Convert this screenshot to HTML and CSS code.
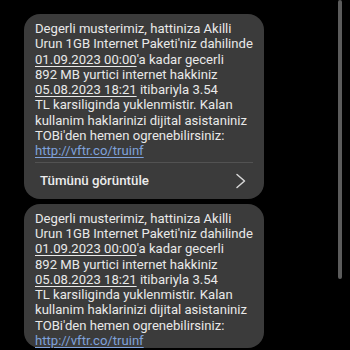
FILE: index.html
```html
<!DOCTYPE html>
<html>
<head>
<meta charset="utf-8">
<link rel="stylesheet" href="styles.css">
</head>
<body>
<div class="thread">
  <div class="bubble">
    <p class="msg">Degerli musterimiz, hattiniza Akilli<br>Urun 1GB Internet Paketi'niz dahilinde<br><span class="u">01.09.2023 00:00</span>'a kadar gecerli<br>892 MB yurtici internet hakkiniz<br><span class="u">05.08.2023 18:21</span> itibariyla 3.54<br>TL karsiliginda yuklenmistir. Kalan<br>kullanim haklarinizi dijital asistaniniz<br>TOBi'den hemen ogrenebilirsiniz:<br><span class="link">http://vftr.co/truinf</span></p>
    <div class="sep"></div>
    <div class="more">
      <span class="more-label">Tümünü görüntüle</span>
      <svg class="chev" width="12" height="16" viewBox="0 0 12 16"><path d="M2 1.5 L9.5 8 L2 14.5" fill="none" stroke="#d8d8d8" stroke-width="1.5" stroke-linecap="round" stroke-linejoin="round"/></svg>
    </div>
  </div>
  <div class="bubble">
    <p class="msg">Degerli musterimiz, hattiniza Akilli<br>Urun 1GB Internet Paketi'niz dahilinde<br><span class="u">01.09.2023 00:00</span>'a kadar gecerli<br>892 MB yurtici internet hakkiniz<br><span class="u">05.08.2023 18:21</span> itibariyla 3.54<br>TL karsiliginda yuklenmistir. Kalan<br>kullanim haklarinizi dijital asistaniniz<br>TOBi'den hemen ogrenebilirsiniz:<br><span class="link">http://vftr.co/truinf</span></p>
  </div>
</div>
<div class="scrollbar"></div>
</body>
</html>
```
FILE: styles.css
```css
html, body {
  margin: 0;
  padding: 0;
  background: #000;
  width: 350px;
  height: 350px;
  overflow: hidden;
}
body {
  position: relative;
  font-family: Roboto, "Noto Sans", sans-serif;
  color: #e9e9e9;
}
.thread {
  display: flex;
  flex-direction: column;
  gap: 5px;
  padding: 14px 0 0 24px;
}
.bubble {
  width: 240px;
  background: #3b3b3b;
  border-radius: 16px;
  box-sizing: border-box;
}
.msg {
  margin: 0;
  padding: 7px 8px 0 11px;
  font-size: 13.1px;
  line-height: 15.3px;
  white-space: nowrap;
}
.u {
  text-decoration: underline;
  text-underline-offset: 2px;
}
.link {
  color: #7fa2dc;
  text-decoration: underline;
  text-underline-offset: 2px;
}
.sep {
  height: 1px;
  background: #525252;
  margin: 3px 11px 0 11px;
}
.more {
  display: flex;
  align-items: center;
  justify-content: space-between;
  height: 36px;
  padding: 0 17px 0 16px;
}
.more-label {
  font-size: 13.3px;
  font-weight: 500;
  color: #ececec;
}
.chev {
  display: block;
}
.scrollbar {
  position: absolute;
  left: 338px;
  top: 0;
  width: 4px;
  height: 279px;
  background: #5c5c5c;
  border-radius: 2px;
}
```
